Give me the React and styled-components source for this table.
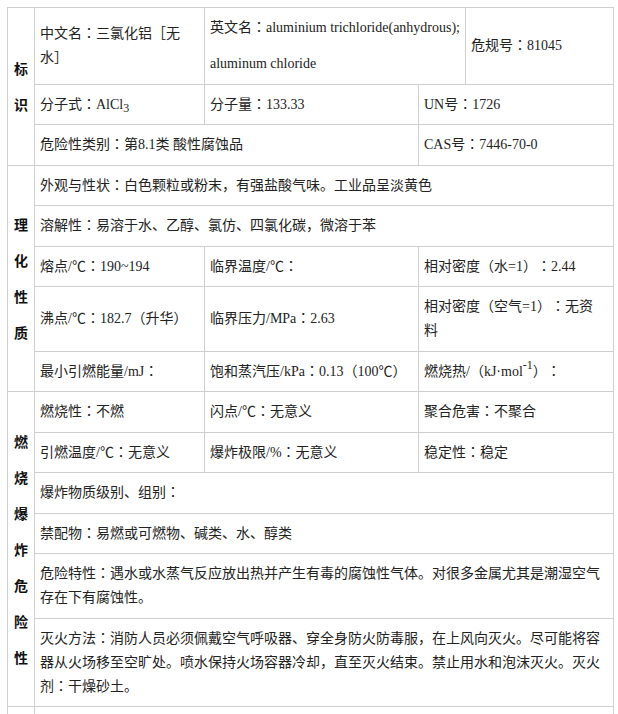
import React from "react";
import styled, { createGlobalStyle } from "styled-components";

const GlobalStyle = createGlobalStyle`
  html, body {
    margin: 0;
    padding: 0;
    background: #fff;
  }
  body {
    font-family: "Liberation Serif", "Noto Sans CJK SC", serif;
    color: #222;
    text-spacing-trim: space-all;
  }
`;

const Page = styled.div`
  padding: 7px 0 0 7px;
`;

const Table = styled.table`
  width: 606px;
  border-collapse: collapse;
  table-layout: fixed;
  font-size: 14px;
`;

const Col = styled.col`
  width: ${(p) => p.$w}px;
`;

const Section = styled.th`
  border: 1px solid #cfcfcf;
  padding: 0;
  font-weight: bold;
  font-family: "Noto Sans CJK SC", sans-serif;
  font-size: 14px;
  line-height: 36px;
  text-align: center;
  vertical-align: middle;
  color: #111;
`;

const Cell = styled.td`
  border: 1px solid #cfcfcf;
  padding: 8px 7px 7.5px 5px;
  line-height: 24px;
  vertical-align: middle;
  text-align: left;

  sub, sup {
    line-height: 0;
    font-size: 12px;
  }
  sub {
    vertical-align: -3px;
  }
  sup {
    vertical-align: 7px;
  }
`;

// centred full-width colon, as the reference's CJK face draws it
const Colon = styled.span`
  font-family: "Noto Sans CJK JP", "Noto Sans CJK SC", sans-serif;
  line-height: 14px;
`;

const Line = styled.span`
  display: block;
  white-space: ${(p) => (p.$nowrap ? "nowrap" : "normal")};
  & + & {
    margin-top: 12px;
  }
`;

function Field({ label, children, ...rest }) {
  return (
    <Cell {...rest}>
      {label}
      <Colon>：</Colon>
      {children}
    </Cell>
  );
}

export default function App() {
  return (
    <Page>
      <GlobalStyle />
      <Table>
        <colgroup>
          <Col $w={27} />
          <Col $w={170} />
          <Col $w={214} />
          <Col $w={47} />
          <Col $w={148} />
        </colgroup>
        <tbody>
          {/* 标识 */}
          <tr>
            <Section rowSpan={3}>标识</Section>
            <Field label="中文名">三氯化铝［无水］</Field>
            <Cell colSpan={2}>
              <Line $nowrap>
                英文名<Colon>：</Colon>aluminium trichloride(anhydrous);
              </Line>
              <Line>aluminum chloride</Line>
            </Cell>
            <Field label="危规号">81045</Field>
          </tr>
          <tr>
            <Field label="分子式">
              AlCl<sub>3</sub>
            </Field>
            <Field label="分子量">133.33</Field>
            <Field label="UN号" colSpan={2}>1726</Field>
          </tr>
          <tr>
            <Field label="危险性类别" colSpan={2}>第8.1类 酸性腐蚀品</Field>
            <Field label="CAS号" colSpan={2}>7446-70-0</Field>
          </tr>

          {/* 理化性质 */}
          <tr>
            <Section rowSpan={5}>理化性质</Section>
            <Field label="外观与性状" colSpan={4}>
              白色颗粒或粉末，有强盐酸气味。工业品呈淡黄色
            </Field>
          </tr>
          <tr>
            <Field label="溶解性" colSpan={4}>
              易溶于水、乙醇、氯仿、四氯化碳，微溶于苯
            </Field>
          </tr>
          <tr>
            <Field label="熔点/℃">190~194</Field>
            <Field label="临界温度/℃" />
            <Field label="相对密度（水=1）" colSpan={2}>2.44</Field>
          </tr>
          <tr>
            <Field label="沸点/℃">182.7（升华）</Field>
            <Field label="临界压力/MPa">2.63</Field>
            <Field label="相对密度（空气=1）" colSpan={2}>无资料</Field>
          </tr>
          <tr>
            <Field label="最小引燃能量/mJ" />
            <Field label="饱和蒸汽压/kPa">0.13（100℃）</Field>
            <Field
              label={
                <>
                  燃烧热/（kJ·mol<sup>-1</sup>）
                </>
              }
              colSpan={2}
            />
          </tr>

          {/* 燃烧爆炸危险性 */}
          <tr>
            <Section rowSpan={6}>燃烧爆炸危险性</Section>
            <Field label="燃烧性">不燃</Field>
            <Field label="闪点/℃">无意义</Field>
            <Field label="聚合危害" colSpan={2}>不聚合</Field>
          </tr>
          <tr>
            <Field label="引燃温度/℃">无意义</Field>
            <Field label="爆炸极限/%">无意义</Field>
            <Field label="稳定性" colSpan={2}>稳定</Field>
          </tr>
          <tr>
            <Field label="爆炸物质级别、组别" colSpan={4} />
          </tr>
          <tr>
            <Field label="禁配物" colSpan={4}>易燃或可燃物、碱类、水、醇类</Field>
          </tr>
          <tr>
            <Field label="危险特性" colSpan={4}>
              遇水或水蒸气反应放出热并产生有毒的腐蚀性气体。对很多金属尤其是潮湿空气存在下有腐蚀性。
            </Field>
          </tr>
          <tr>
            <Field label="灭火方法" colSpan={4}>
              消防人员必须佩戴空气呼吸器、穿全身防火防毒服，在上风向灭火。尽可能将容器从火场移至空旷处。喷水保持火场容器冷却，直至灭火结束。禁止用水和泡沫灭火。灭火剂
              <Colon>：</Colon>干燥砂土。
            </Field>
          </tr>

          {/* 包装与储运 */}
          <tr>
            <Section rowSpan={2}>包装与储运</Section>
            <Field label="危险性标志" colSpan={4}>20（酸性腐蚀品）</Field>
          </tr>
          <tr>
            <Field label="包装类别" colSpan={4}>Ⅱ</Field>
          </tr>
        </tbody>
      </Table>
    </Page>
  );
}
